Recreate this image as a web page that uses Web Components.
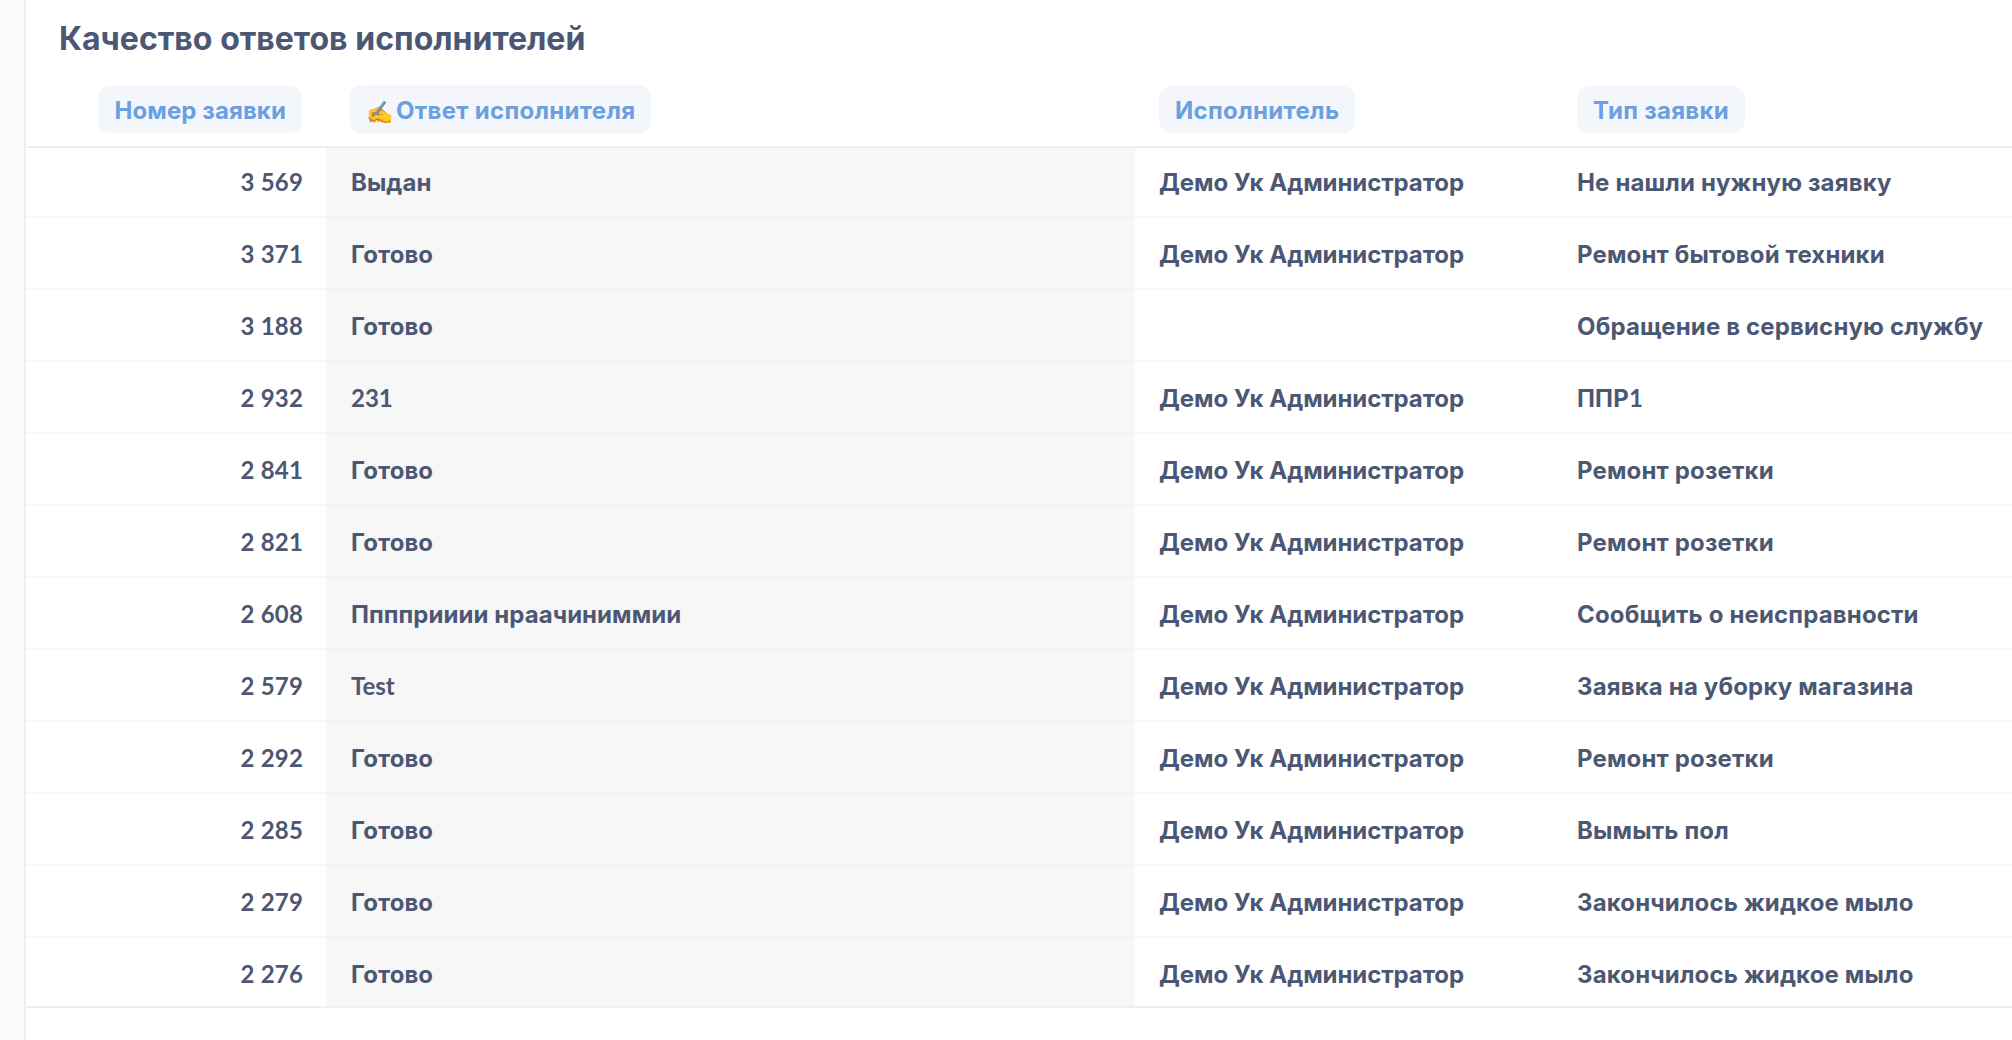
<!DOCTYPE html>
<html><head><meta charset="utf-8"><style>
html,body{margin:0;padding:0;height:100%;overflow:hidden;background:#f9fbfd}
body{font-family:Lato,"Liberation Sans",sans-serif;color:#4c5773}
</style></head><body>
<qa-card title-text="Качество ответов исполнителей">
<qa-row slot="rows" n="3 569" a="Выдан" e="Демо Ук Администратор" t="Не нашли нужную заявку" first></qa-row>
<qa-row slot="rows" n="3 371" a="Готово" e="Демо Ук Администратор" t="Ремонт бытовой техники"></qa-row>
<qa-row slot="rows" n="3 188" a="Готово" e="" t="Обращение в сервисную службу"></qa-row>
<qa-row slot="rows" n="2 932" a="231" e="Демо Ук Администратор" t="ППР1"></qa-row>
<qa-row slot="rows" n="2 841" a="Готово" e="Демо Ук Администратор" t="Ремонт розетки"></qa-row>
<qa-row slot="rows" n="2 821" a="Готово" e="Демо Ук Администратор" t="Ремонт розетки"></qa-row>
<qa-row slot="rows" n="2 608" a="Пппприиии нраачиниммии" e="Демо Ук Администратор" t="Сообщить о неисправности"></qa-row>
<qa-row slot="rows" n="2 579" a="Test" e="Демо Ук Администратор" t="Заявка на уборку магазина"></qa-row>
<qa-row slot="rows" n="2 292" a="Готово" e="Демо Ук Администратор" t="Ремонт розетки"></qa-row>
<qa-row slot="rows" n="2 285" a="Готово" e="Демо Ук Администратор" t="Вымыть пол"></qa-row>
<qa-row slot="rows" n="2 279" a="Готово" e="Демо Ук Администратор" t="Закончилось жидкое мыло"></qa-row>
<qa-row slot="rows" n="2 276" a="Готово" e="Демо Ук Администратор" t="Закончилось жидкое мыло" last></qa-row>
</qa-card>
<script>
const COLS='grid-template-columns:300px 809px 442px 1fr;';
const CY='b{font:inherit;font-family:Inter,sans-serif;font-weight:700;letter-spacing:var(--cy,.05px)}';
const mix=t=>t.replace(/[\u0400-\u04FF]+/g,m=>'<b>'+m+'</b>');
class QaCard extends HTMLElement{constructor(){super();this.attachShadow({mode:'open'}).innerHTML=`<style>${CY}
:host{display:block;height:1040px;margin-left:24px;background:#fff;border-left:2px solid #eeeff1;box-sizing:border-box;overflow:hidden}
h1{margin:0;padding:19px 0 0 33px;height:58px;box-sizing:border-box;font:700 32px/38px Lato,sans-serif;color:#4c5773;white-space:pre;--cy:0px}
.head{display:grid;${COLS}height:90px;box-sizing:border-box;border-bottom:2px solid #eeeff1;align-items:start;padding-top:28px;--cy:.32px}
.th{display:inline-flex;align-items:center;height:47px;box-sizing:border-box;padding:0 16px;border-radius:12px;background:#f3f6fb;color:#6a9fe0;font-weight:700;font-size:24px;white-space:pre}
.th.tall{height:49px;margin-top:-1px}
.c{display:flex}.c1{justify-content:flex-end;padding-right:24px;--cy:.1px}.c2,.c3{padding-left:24px}
.rows{border-bottom:2px solid #eeeff1}
.em{font-size:22px;margin-right:3px;font-family:"Noto Sans CJK SC",sans-serif}
</style><h1></h1><div class="head"><div class="c c1"><span class="th"><span>${mix('Номер заявки')}</span></span></div><div class="c c2"><span class="th tall"><span class="em">✍</span><span>${mix('Ответ исполнителя')}</span></span></div><div class="c c3"><span class="th"><span>${mix('Исполнитель')}</span></span></div><div class="c c4"><span class="th"><span>${mix('Тип заявки')}</span></span></div></div><div class="rows"><slot name="rows"></slot></div>`;
this.shadowRoot.querySelector('h1').innerHTML=mix(this.getAttribute('title-text'));}}
class QaRow extends HTMLElement{constructor(){super();const s=this.attachShadow({mode:'open'});const g=k=>this.getAttribute(k)||'';
const first=this.hasAttribute('first'),last=this.hasAttribute('last');
const h=first?68:last?68:70, lh=first?68:72, bw=last?0:2;
s.innerHTML=`<style>${CY}
:host{display:block}
.r{display:grid;${COLS}grid-template-rows:${h}px;border-bottom:${bw}px solid #f6f7f8;font-weight:700;font-size:24px;color:#4c5773;line-height:${lh}px;white-space:pre}
.n{text-align:right;padding-right:23px;height:${h}px;letter-spacing:.2px}.a{background:#f7f7f7;padding-left:25px;height:${h+bw}px;margin-bottom:-${bw}px;box-sizing:border-box;border-bottom:${bw}px solid #f3f4f4}.e{padding-left:24px;--cy:-.07px}.t{--cy:.15px}
</style><div class="r"><div class="n"></div><div class="a"></div><div class="e"></div><div class="t"></div></div>`;
for(const k of ['n','a','e','t'])s.querySelector('.'+k).innerHTML=mix(g(k));}}
customElements.define('qa-card',QaCard);customElements.define('qa-row',QaRow);
</script></body></html>
